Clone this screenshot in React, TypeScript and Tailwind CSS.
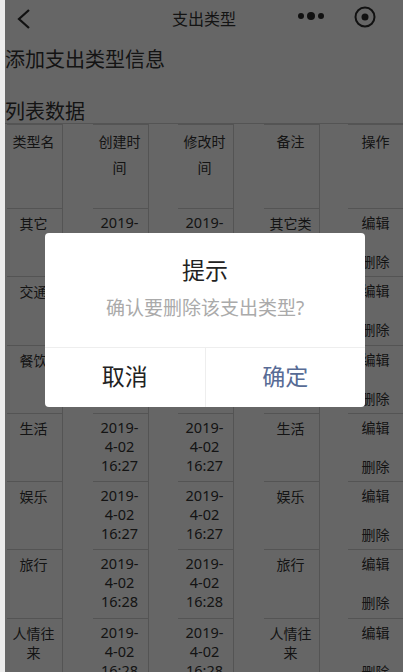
const font = { fontFamily: '"Noto Sans", "Noto Sans CJK SC", sans-serif' };

type Row = { name: string; time: string[]; note: string };

const t27 = ["2019-", "4-02", "16:27"];
const t28 = ["2019-", "4-02", "16:28"];

const rows: Row[] = [
  { name: "其它", time: t27, note: "其它类型" },
  { name: "交通", time: t27, note: "交通" },
  { name: "餐饮", time: t27, note: "餐饮" },
  { name: "生活", time: t27, note: "生活" },
  { name: "娱乐", time: t27, note: "娱乐" },
  { name: "旅行", time: t28, note: "旅行" },
  { name: "人情往来", time: t28, note: "人情往来" },
];

function Cell({ children, last, header }: { children: React.ReactNode; last?: boolean; header?: boolean }) {
  return (
    <div className={`flex justify-end border-[#d2d2d2] ${last ? "" : "border-r"}`}>
      <div
        className={`w-[55px] border-t border-[#d2d2d2] pt-[4px] text-center break-all ${last ? "" : "pr-[2px]"} ${
          header ? "leading-[26px]" : "leading-[19px]"
        }`}
      >
        {children}
      </div>
    </div>
  );
}

function Time({ lines }: { lines: string[] }) {
  return (
    <>
      {lines.map((l) => (
        <div key={l} className="text-[14.5px]">
          {l}
        </div>
      ))}
    </>
  );
}

const gridClass = "grid grid-cols-[58px_86px_85px_86px_83px] text-[14px] text-[#333333]";

export default function App() {
  return (
    <div className="relative h-[672px] w-[403px] overflow-hidden bg-[#ececec] pl-[5px]" style={font}>
      <div className="h-full bg-white">
        <div className="flex h-[38px] items-center justify-center text-[16px] text-[#333333]">支出类型</div>
        <div className="mt-[8px] h-[28px] text-[20px] leading-[28px] text-[#333333]">添加支出类型信息</div>
        <div className="mt-[24px] h-[25px] text-[20px] leading-[28px] text-[#333333]">列表数据</div>

        <div className="border-t border-[#d2d2d2]">
          <div className={`${gridClass} h-[84px]`}>
            <Cell header>类型名</Cell>
            <Cell header>创建时间</Cell>
            <Cell header>修改时间</Cell>
            <Cell header>备注</Cell>
            <Cell header last>操作</Cell>
          </div>
          {rows.map((r) => (
            <div key={r.name} className={`${gridClass} h-[68.3px]`}>
              <Cell><div className="mt-px">{r.name}</div></Cell>
              <Cell><Time lines={r.time} /></Cell>
              <Cell><Time lines={r.time} /></Cell>
              <Cell><div className="mt-px">{r.note}</div></Cell>
              <Cell last>
                <div>编辑</div>
                <div className="mt-[20px]">删除</div>
              </Cell>
            </div>
          ))}
        </div>
      </div>

      {/* Modal mask */}
      <div className="absolute inset-y-0 left-[5px] right-0 bg-black/60" />

      {/* Nav capsule icons, drawn over the mask */}
      <svg className="absolute left-[16px] top-[8px]" width="16" height="22" viewBox="0 0 16 22" fill="none">
        <path d="M13 2 L3 11 L13 20" stroke="#111" strokeWidth="2.2" />
      </svg>
      <svg className="absolute left-[296px] top-[6px]" width="84" height="22" viewBox="0 0 84 22" fill="none">
        <circle cx="5" cy="10" r="3" fill="#111" />
        <circle cx="15" cy="10" r="4" fill="#111" />
        <circle cx="25" cy="10" r="3" fill="#111" />
        <circle cx="69" cy="11" r="9.5" stroke="#111" strokeWidth="2" />
        <circle cx="69" cy="11" r="3.5" fill="#111" />
      </svg>

      {/* Dialog */}
      <div className="absolute left-[45px] top-[233px] flex h-[174px] w-[320px] flex-col rounded-[4px] bg-white text-center">
        <div className="mt-[21px] text-[23px] leading-[32px] text-[#222222]">提示</div>
        <div className="mt-[8px] text-[19px] leading-[28px] text-[#aaaaaa]">确认要删除该支出类型?</div>
        <div className="mt-auto flex h-[60px] border-t border-[#eeeeee] text-[23px] leading-[56px]">
          <div className="flex-1 border-r border-[#eeeeee] text-[#222222]">取消</div>
          <div className="flex-1 text-[#576b95]">确定</div>
        </div>
      </div>
    </div>
  );
}
